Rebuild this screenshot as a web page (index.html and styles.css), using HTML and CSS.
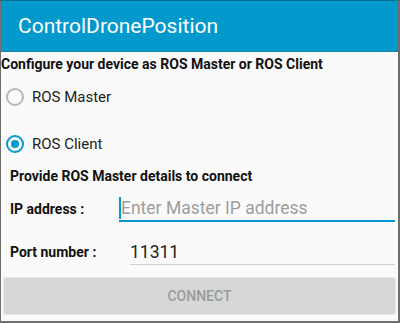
FILE: index.html
```html
<!DOCTYPE html>
<html>
<head>
<meta charset="utf-8">
<link rel="stylesheet" href="styles.css">
</head>
<body>
<div class="frame">
  <header class="appbar">ControlDronePosition</header>
  <main class="content">
    <div class="heading">Configure your device as ROS Master or ROS Client</div>
    <div class="radios">
      <div class="radio"><span class="dot"></span><span class="rlabel">ROS Master</span></div>
      <div class="radio checked"><span class="dot"></span><span class="rlabel">ROS Client</span></div>
    </div>
    <div class="form">
      <div class="subheading">Provide ROS Master details to connect</div>
      <div class="row first">
        <span class="label">IP address :</span>
        <div class="field active"><span class="cursor"></span><span class="placeholder">Enter Master IP address</span></div>
      </div>
      <div class="row">
        <span class="label">Port number :</span>
        <div class="field port"><span class="value">11311</span></div>
      </div>
    </div>
    <button class="connect">CONNECT</button>
  </main>
</div>
</body>
</html>
```

FILE: styles.css
```css
* { box-sizing: border-box; }
html, body { margin: 0; padding: 0; }
body { width: 400px; height: 323px; overflow: hidden; font-family: Roboto, "Liberation Sans", sans-serif; background: #fafafa; }
.frame {
  width: 400px; height: 323px;
  border-left: 1px solid #6e6e6e;
  border-right: 2px solid #6e6e6e;
  border-bottom: 2px solid #6e6e6e;
  border-top: 1px solid #0a6c8c;
  display: flex; flex-direction: column;
  background: #fafafa;
}
.appbar {
  height: 51px;
  background: #0399cc;
  color: #fff;
  font-size: 21px;
  padding-left: 17px;
  display: flex; align-items: center;
  border-bottom: 1px solid #1c7fa3;
  flex-shrink: 0;
}
.content { display: flex; flex-direction: column; flex: 1; }
.heading { font-weight: bold; font-size: 14px; color: #111; margin-top: 4px; line-height: 17px; }
.radios { display: flex; flex-direction: column; gap: 15px; margin-top: 8px; padding-left: 4px; }
.radio { display: flex; align-items: center; height: 32px; gap: 8px; }
.dot { width: 18px; height: 18px; border: 2px solid #b8b8b8; border-radius: 50%; margin-left: 1px; position: relative; }
.checked .dot { border-color: #0399cc; }
.checked .dot::after { content: ""; position: absolute; left: 3px; top: 3px; width: 8px; height: 8px; border-radius: 50%; background: #0399cc; }
.rlabel { font-size: 15px; color: #222; }
.form { padding-left: 9px; padding-right: 3px; }
.subheading { font-weight: bold; font-size: 14px; color: #111; margin-top: 8px; line-height: 17px; }
.row { display: flex; align-items: center; height: 42px; }
.row.first { margin-top: 3px; }
.row + .row { margin-top: 1px; }
.label { font-weight: bold; font-size: 14px; color: #111; width: 109px; }
.field { flex: 1; height: 26px; display: flex; align-items: center; border-bottom: 1px solid #cfcfcf; font-size: 17.5px; position: relative; }
.field.active { border-bottom: 2px solid #0399cc; }
.cursor { width: 2px; height: 22px; background: #0399cc; }
.placeholder { color: #9e9e9e; }
.field.port { margin-left: 11px; }
.value { color: #222; }
.connect {
  margin: 5px 3px 0 3px;
  height: 36px;
  background: #d6d7d7;
  border: none; border-radius: 2px;
  color: #9a9a9a;
  font-family: Roboto, "Liberation Sans", sans-serif;
  font-size: 14px; font-weight: 500;
  box-shadow: 0 0 0 1px #e4e4e4;
}
```
